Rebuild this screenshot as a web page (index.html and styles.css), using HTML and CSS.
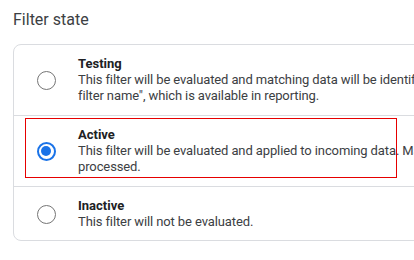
FILE: index.html
```html
<!DOCTYPE html>
<html lang="en">
<head>
<meta charset="utf-8">
<title>Filter state</title>
<link rel="stylesheet" href="styles.css">
</head>
<body>
<div class="page">
  <h2 class="heading">Filter state</h2>
  <div class="card">
    <div class="option">
      <div class="radio-cell"><span class="radio"></span></div>
      <div class="text">
        <div class="label">Testing</div>
        <div class="desc">This filter will be evaluated and matching data will be identified with the dimension "Test data<br>filter name", which is available in reporting.</div>
      </div>
    </div>
    <div class="option">
      <div class="radio-cell"><span class="radio checked"></span></div>
      <div class="text">
        <div class="label">Active</div>
        <div class="desc">This filter will be evaluated and applied to incoming data. Matching data will be modified before it is<br>processed.</div>
      </div>
      <div class="highlight"></div>
    </div>
    <div class="option last">
      <div class="radio-cell"><span class="radio"></span></div>
      <div class="text">
        <div class="label">Inactive</div>
        <div class="desc">This filter will not be evaluated.</div>
      </div>
    </div>
  </div>
</div>
</body>
</html>
```
FILE: styles.css
```css
html, body {
  margin: 0;
  padding: 0;
  overflow: hidden;
  background: #ffffff;
}
body {
  font-family: Roboto, "Liberation Sans", Arial, sans-serif;
  color: #3c4043;
}
.page {
  padding: 8px 0 0 13px;
}
.heading {
  margin: 0 0 12px 0;
  font-size: 16px;
  line-height: 24px;
  font-weight: 400;
  color: #3c4043;
}
.card {
  width: 640px;
  border: 1px solid #dadce0;
  border-radius: 8px;
}
.option {
  position: relative;
  display: flex;
  align-items: center;
  padding: 11px 0;
  border-top: 1px solid #dadce0;
}
.option:first-child {
  border-top: none;
}
.option.last {
  padding: 11px 0 10px 0;
}
.radio-cell {
  width: 64px;
  flex: none;
  display: flex;
  justify-content: center;
  align-items: center;
}
.radio {
  box-sizing: border-box;
  width: 19px;
  height: 19px;
  border: 1.5px solid #757575;
  border-radius: 50%;
  display: flex;
  align-items: center;
  justify-content: center;
}
.radio.checked {
  border: 2px solid #1a73e8;
}
.radio.checked::after {
  content: "";
  width: 10px;
  height: 10px;
  border-radius: 50%;
  background: #1a73e8;
}
.text {
  font-size: 13px;
  line-height: 16px;
  white-space: nowrap;
  letter-spacing: -0.11px;
}
.label {
  font-weight: 700;
  color: #202124;
  letter-spacing: 0;
}
.desc {
  color: #3c4043;
}
.highlight {
  position: absolute;
  box-sizing: border-box;
  left: 11px;
  top: 2px;
  width: 372px;
  height: 60px;
  border: 1px solid #e60000;
  pointer-events: none;
}
```
